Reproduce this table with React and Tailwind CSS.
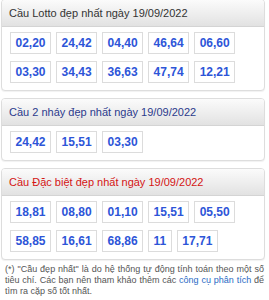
import React from 'react';

const panels = [
  {
    title: 'Cầu Lotto đẹp nhất ngày 19/09/2022',
    color: 'text-[#333333]',
    rows: [
      ['02,20', '24,42', '04,40', '46,64', '06,60'],
      ['03,30', '34,43', '36,63', '47,74', '12,21'],
    ],
  },
  {
    title: 'Cầu 2 nháy đẹp nhất ngày 19/09/2022',
    color: 'text-[#2b3a8c]',
    rows: [['24,42', '15,51', '03,30']],
  },
  {
    title: 'Cầu Đặc biệt đẹp nhất ngày 19/09/2022',
    color: 'text-[#d41414]',
    rows: [
      ['18,81', '08,80', '01,10', '15,51', '05,50'],
      ['58,85', '16,61', '68,86', '11', '17,71'],
    ],
  },
];

const Panel = ({ title, color, rows }) => (
  <div className="mx-[1px] w-[264px] rounded-[4px] border border-[#dddddd] bg-white shadow-[0_1px_1px_rgba(0,0,0,0.06)] overflow-hidden">
    <div className={`h-[27px] flex items-center pl-[7px] border-b border-[#d4d4d4] bg-gradient-to-b from-[#fbfbfb] to-[#e2e2e2] text-[11px] ${color}`}>
      {title}
    </div>
    <div className="flex flex-col gap-[7px] pl-[8px] pt-[5px] pb-[7px]">
      {rows.map((row, i) => (
        <div key={i} className="flex gap-[5px]">
          {row.map((n) => (
            <span
              key={n}
              className="h-[22px] px-[4.5px] flex items-center justify-center border border-[#dcdcdc] text-[12px] font-bold text-[#2d55d8]"
            >
              {n}
            </span>
          ))}
        </div>
      ))}
    </div>
  </div>
);

export default function App() {
  return (
    <div className="w-[269px] h-[300px] bg-white overflow-hidden font-['Liberation_Sans',Arial,sans-serif]">
      <div className="flex flex-col gap-[7px] -mt-[1px]">
        {panels.map((p) => (
          <Panel key={p.title} {...p} />
        ))}
      </div>
      <p className="mt-[4px] pl-[5px] pr-[5px] text-[9px] leading-[11px] text-[#555555] text-justify">
        (*) "Cầu đẹp nhất" là do hệ thống tự động tính toán theo một số tiêu chí. Các bạn nên tham khảo thêm các{' '}
        <span className="text-[#2a6bc5]">công cụ phân tích</span> để tìm ra cặp số tốt nhất.
      </p>
    </div>
  );
}
